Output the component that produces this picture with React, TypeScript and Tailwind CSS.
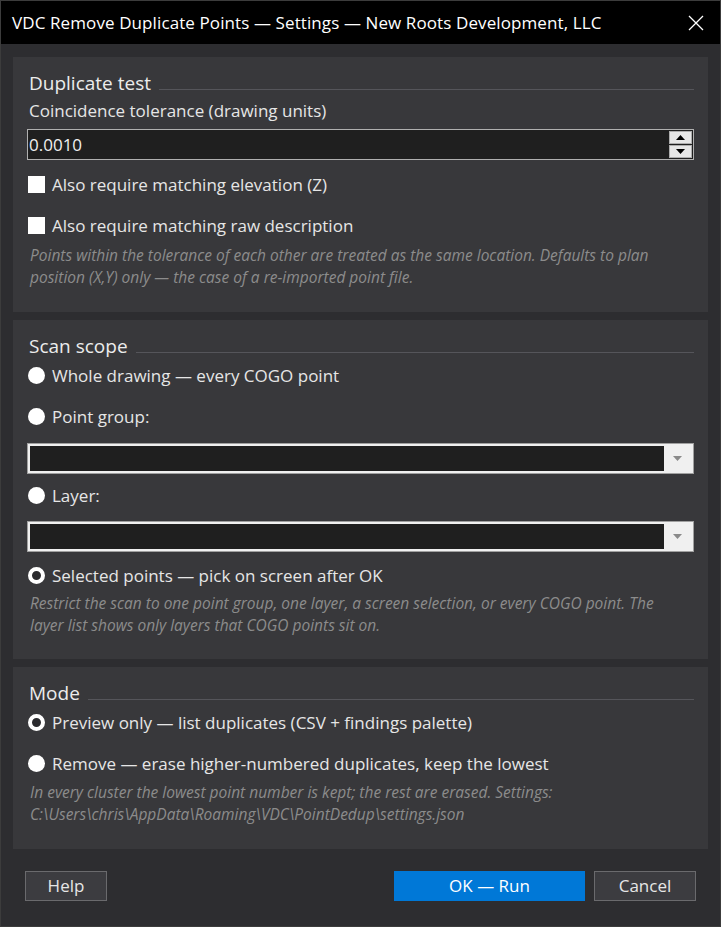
import React from 'react';

const font = { fontFamily: '"Open Sans", "Noto Sans", sans-serif' };

function SectionHeader({ title }: { title: string }) {
  return (
    <div className="flex h-[30px] items-center">
      <span className="ml-[2px] text-[19px] text-[#ececec]">{title}</span>
      <div className="ml-[8px] mt-[12px] h-px flex-1 bg-[#55555a]" />
    </div>
  );
}

function Checkbox({ label }: { label: string }) {
  return (
    <div className="flex h-[33px] items-center">
      <div className="ml-[1px] h-[17px] w-[17px] bg-white" />
      <span className="ml-[7px] text-[17px] text-[#e6e6e6]">{label}</span>
    </div>
  );
}

function Radio({ label, checked }: { label: string; checked?: boolean }) {
  return (
    <div className="flex h-[29px] items-center">
      {checked ? (
        <div className="ml-[1px] h-[17px] w-[17px] rounded-full border-[4px] border-white bg-[#2b2b2e]" />
      ) : (
        <div className="ml-[1px] h-[17px] w-[17px] rounded-full bg-white" />
      )}
      <span className="ml-[7px] text-[17px] text-[#e6e6e6]">{label}</span>
    </div>
  );
}

function Help({ children }: { children: React.ReactNode }) {
  return <p className="ml-[3px] text-[15.5px] italic leading-[22px] text-[#8c8c8c]">{children}</p>;
}

function Combo({ className }: { className: string }) {
  return (
    <div className={`flex h-[31px] border border-[#a0a0a0] bg-[#f0f0f0] p-[2px] ${className}`}>
      <div className="flex-1 bg-[#1f1f1f]" />
      <div className="flex w-[27px] items-center justify-center">
        <svg width="9" height="5" viewBox="0 0 9 5">
          <path d="M0 0h9L4.5 5z" fill="#8a8a8a" />
        </svg>
      </div>
    </div>
  );
}

function Button({ label, primary, className }: { label: string; primary?: boolean; className: string }) {
  return (
    <button
      className={`flex h-[30px] items-center justify-center text-[17px] ${
        primary ? 'bg-[#0078d7] text-white' : 'border border-[#6a6a6d] bg-[#3c3c40] text-[#e6e6e6]'
      } ${className}`}
    >
      {label}
    </button>
  );
}

export default function App() {
  return (
    <div className="flex h-[927px] w-[721px] flex-col border border-[#3c3c3c] bg-[#2d2d30]" style={font}>
      {/* title bar */}
      <div className="flex h-[43px] shrink-0 items-center bg-black pl-[11px] pr-[16px]">
        <span className="flex-1 text-[17px] tracking-[0.1px] text-white">
          VDC Remove Duplicate Points — Settings — New Roots Development, LLC
        </span>
        <svg width="16" height="16" viewBox="0 0 16 16">
          <path d="M1 1L15 15M15 1L1 15" stroke="white" strokeWidth="1.3" />
        </svg>
      </div>

      <div className="flex flex-col gap-[8px] px-[12px] pt-[13px]">
        {/* Duplicate test */}
        <section className="flex flex-col bg-[#38383b] px-[14px] pb-[24px] pt-[11px]">
          <SectionHeader title="Duplicate test" />
          <div className="ml-[2px] flex h-[26px] items-center text-[17px] text-[#e6e6e6]">
            Coincidence tolerance (drawing units)
          </div>
          <div className="mt-[5px] flex h-[31px] border border-[#b0b0b0] bg-[#1f1f1f]">
            <span className="flex flex-1 items-center pl-[1px] text-[17px] text-[#f0f0f0]">0.0010</span>
            <div className="flex w-[25px] flex-col gap-px p-px">
              <div className="flex flex-1 items-center justify-center border border-[#adadad] bg-[#e6e6e6]">
                <svg width="9" height="5" viewBox="0 0 9 5">
                  <path d="M0 5h9L4.5 0z" fill="black" />
                </svg>
              </div>
              <div className="flex flex-1 items-center justify-center border border-[#adadad] bg-[#e6e6e6]">
                <svg width="9" height="5" viewBox="0 0 9 5">
                  <path d="M0 0h9L4.5 5z" fill="black" />
                </svg>
              </div>
            </div>
          </div>
          <div className="mt-[8px]">
            <Checkbox label="Also require matching elevation (Z)" />
          </div>
          <div className="mt-[8px]">
            <Checkbox label="Also require matching raw description" />
          </div>
          <div className="mt-[2px]">
            <Help>
              Points within the tolerance of each other are treated as the same location. Defaults to plan
              <br />
              position (X,Y) only — the case of a re-imported point file.
            </Help>
          </div>
        </section>

        {/* Scan scope */}
        <section className="flex flex-col bg-[#38383b] px-[14px] pb-[23px] pt-[11px]">
          <SectionHeader title="Scan scope" />
          <Radio label="Whole drawing — every COGO point" />
          <div className="mt-[12px]">
            <Radio label="Point group:" />
          </div>
          <Combo className="mt-[12px]" />
          <div className="mt-[7px]">
            <Radio label="Layer:" />
          </div>
          <Combo className="mt-[11px]" />
          <div className="mt-[9px]">
            <Radio label="Selected points — pick on screen after OK" checked />
          </div>
          <div className="mt-[2px]">
            <Help>
              Restrict the scan to one point group, one layer, a screen selection, or every COGO point. The
              <br />
              layer list shows only layers that COGO points sit on.
            </Help>
          </div>
        </section>

        {/* Mode */}
        <section className="flex flex-col bg-[#38383b] px-[14px] pb-[24px] pt-[11px]">
          <SectionHeader title="Mode" />
          <Radio label="Preview only — list duplicates (CSV + findings palette)" checked />
          <div className="mt-[12px]">
            <Radio label="Remove — erase higher-numbered duplicates, keep the lowest" />
          </div>
          <div className="mt-[3px]">
            <Help>
              In every cluster the lowest point number is kept; the rest are erased. Settings:
              <br />
              C:\Users\chris\AppData\Roaming\VDC\PointDedup\settings.json
            </Help>
          </div>
        </section>
      </div>

      {/* footer */}
      <div className="mt-[22px] flex px-[24px]">
        <Button label="Help" className="w-[82px]" />
        <div className="flex-1" />
        <Button label="OK — Run" primary className="w-[191px]" />
        <Button label="Cancel" className="ml-[9px] w-[102px]" />
      </div>
    </div>
  );
}
